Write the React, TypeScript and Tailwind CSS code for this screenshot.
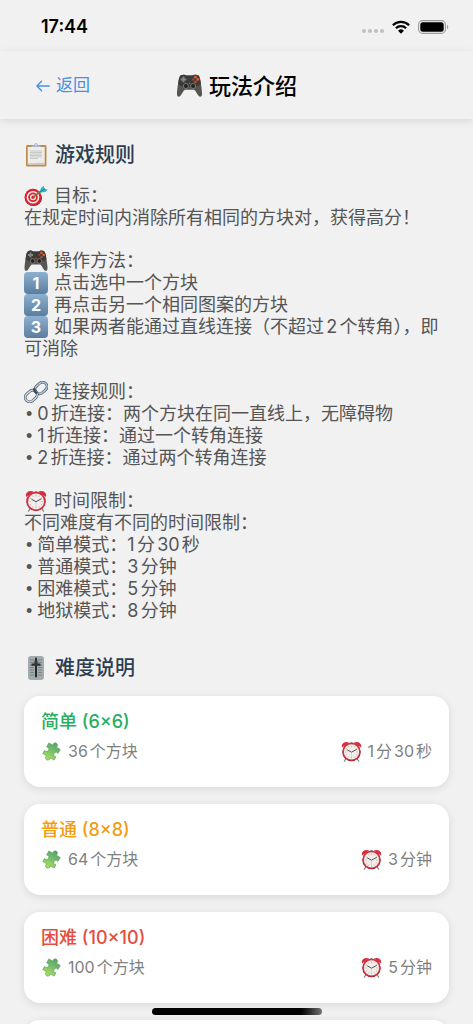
import React from "react";

type IconProps = { className?: string };

const GamepadIcon: React.FC<IconProps> = ({ className }) => (
  <svg viewBox="0 0 24 22" className={className} aria-hidden="true">
    <path
      d="M4 1.2C5.500.3 8 .4 9 1.400h6c1-1 3.500-1.100 5-.2 1 .6 1.500 2.400 2 5 .7 4 1.400 8.500 1.500 12 .1 2.500-1.600 3.300-3 2-1.600-1.500-2.500-4.700-4.200-5.800H7.700C6 15.500 5.100 18.700 3.500 20.200c-1.400 1.300-3.100.5-3-2 .1-3.500.8-8 1.500-12 .5-2.600 1-4.400 2-5z"
      fill="#555652"
    />
    <path
      d="M4 1.2C5.500.3 8 .4 9 1.400h6c1-1 3.500-1.100 5-.2 1 .6 1.500 2.400 2 5l.4 3c-3 3.500-17.800 3.500-20.800 0l.4-3c.5-2.600 1-4.400 2-5z"
      fill="#3b3c3a"
    />
    <path d="M6.500 2.500v5M4 5h5" stroke="#858783" strokeWidth="1.800" />
    <circle cx="17.500" cy="2.900" r="1.300" fill="#f2552c" />
    <circle cx="15.500" cy="5" r="1.100" fill="#96452e" />
    <circle cx="19.700" cy="5" r="1.300" fill="#f2552c" />
    <circle cx="17.500" cy="7.100" r="1.200" fill="#d9451f" />
    <circle cx="8.700" cy="11" r="2.300" fill="#222" stroke="#8d8e8a" strokeWidth=".7" />
    <circle cx="15.300" cy="11" r="2.300" fill="#222" stroke="#8d8e8a" strokeWidth=".7" />
    <circle cx="12" cy="8.500" r=".7" fill="#e5522b" />
  </svg>
);

const ClipboardIcon: React.FC<IconProps> = ({ className }) => (
  <svg viewBox="0 0 24 24" className={className} aria-hidden="true">
    <rect x="2" y="2" width="20.500" height="21.500" rx="1.500" fill="#bd8b4b" />
    <path d="M3.700 4h17v17.500h-17z" fill="#ededeb" />
    <path d="M3.700 20.500l17-1v2h-17z" fill="#c9c9c7" />
    <path
      d="M6 8h12M6 9.500h12M6 11h12M6 12.500h12M6 14h12M6 15.500h8"
      stroke="#bfc0c1"
      strokeWidth=".8"
    />
    <path d="M7 4c0-1.300 1-1.600 3-1.800C10.200.9 10.900.3 12 .3s1.800.6 2 1.900c2 .2 3 .5 3 1.800z" fill="#aeb8c7" />
    <circle cx="12" cy="1.700" r=".7" fill="#f0f0f0" />
  </svg>
);

const TargetIcon: React.FC<IconProps> = ({ className }) => (
  <svg viewBox="0 0 24 22" className={className} aria-hidden="true">
    <ellipse cx="9.500" cy="13.300" rx="8.500" ry="7.800" fill="#8e1b22" />
    <circle cx="9" cy="12.300" r="8.500" fill="#d9242f" />
    <circle cx="9" cy="12.300" r="6.300" fill="#f7eeee" />
    <circle cx="9" cy="12.300" r="4.800" fill="#d9242f" />
    <circle cx="9" cy="12.300" r="3" fill="#f7eeee" />
    <circle cx="9" cy="12.300" r="1.700" fill="#d9242f" />
    <path d="M9.500 12l7-5.500" stroke="#8a7340" strokeWidth="1.600" />
    <path d="M15 7.800l2.200-5L20 .8l.3 2.900 3.400.8-2.400 2.600z" fill="#35b3c4" />
    <path d="M15.300 7.500L21 3.500" stroke="#16798d" strokeWidth=".9" />
  </svg>
);

const LinkIcon: React.FC<IconProps> = ({ className }) => (
  <svg viewBox="0 0 24 22" className={className} aria-hidden="true">
    <g fill="none">
      <rect x="10.500" y="2.600" width="13" height="8.800" rx="4.400" transform="rotate(-42 17 7)" stroke="#4b5867" strokeWidth="2.800" />
      <rect x="10.500" y="2.600" width="13" height="8.800" rx="4.400" transform="rotate(-42 17 7)" stroke="#b4c6d8" strokeWidth="1.500" />
      <rect x=".7" y="10.600" width="13" height="8.800" rx="4.400" transform="rotate(-42 7.200 15)" stroke="#4b5867" strokeWidth="2.800" />
      <rect x=".7" y="10.600" width="13" height="8.800" rx="4.400" transform="rotate(-42 7.200 15)" stroke="#c7d6e4" strokeWidth="1.500" />
      <path d="M10.600 7.200c-.9 2.300.5 4.200 2.700 4.800" stroke="#3b4550" strokeWidth="2.300" />
    </g>
  </svg>
);

const ClockIcon: React.FC<IconProps> = ({ className }) => (
  <svg viewBox="0 0 24 24" className={className} aria-hidden="true">
    <path d="M5.500 20.500L3.500 23.500M18.500 20.500l2 3" stroke="#8b8b8b" strokeWidth="1.400" />
    <path d="M10.500 1h3v2h-3z" fill="#a6a6a6" />
    <path d="M1.200 7.500C-.3 3.200 4-.5 9.500 1.700z" fill="#d52f3f" />
    <path d="M22.800 7.500C24.300 3.200 20-.5 14.500 1.700z" fill="#d52f3f" />
    <circle cx="12" cy="12.500" r="10.600" fill="#a91f2d" />
    <circle cx="12" cy="12.200" r="10.300" fill="#cf3140" />
    <circle cx="12" cy="12.500" r="8.700" fill="#f1efec" />
    <path
      d="M12 5v2M12 18v2M4.500 12.500h2M17.500 12.500h2M8.200 6l.8 1.400M15.800 6L15 7.400M5.500 8.700l1.400.8M18.500 8.700l-1.400.8M5.500 16.300l1.400-.8M18.500 16.300l-1.400-.8M8.200 19l.8-1.400M15.800 19l-.8-1.400"
      stroke="#d99b97"
      strokeWidth=".8"
    />
    <path d="M7 10l5 2.800 6-3.300" stroke="#3d3d3d" strokeWidth="1" fill="none" />
    <path d="M12 12.800v5" stroke="#bbb" strokeWidth=".5" />
  </svg>
);

const SliderIcon: React.FC<IconProps> = ({ className }) => (
  <svg viewBox="0 0 24 24" className={className} aria-hidden="true">
    <rect x="4" y="0" width="16" height="24" rx="3" fill="#a3aaad" />
    <path
      d="M6 4h4M6 6.500h4M6 9h4M6 11.500h4M6 14h4M6 16.500h4M6 19h4M14 4h4M14 6.500h4M14 9h4M14 11.500h4M14 14h4M14 16.500h4M14 19h4"
      stroke="#737b7f"
      strokeWidth=".8"
    />
    <path d="M12 2.500v18" stroke="#24282a" strokeWidth="2" strokeLinecap="round" />
    <path d="M7.800 7.500h8.400l.5 2.300H7.300z" fill="#2c3032" />
    <path d="M10.500 4.500h3l.3 5.300h-3.600z" fill="#34393b" />
  </svg>
);

const PuzzleIcon: React.FC<IconProps> = ({ className }) => (
  <svg viewBox="0 0 24 24" className={className} aria-hidden="true">
    <defs>
      <linearGradient id="puzzle" x1="0" y1="0" x2="0" y2="1">
        <stop offset="0" stopColor="#4fa46d" />
        <stop offset=".5" stopColor="#7cc06a" />
        <stop offset="1" stopColor="#a8e65a" />
      </linearGradient>
    </defs>
    {/* knobs on top, right and bottom-left corner piece, bites on the other sides */}
    <path
      d="M4.500 5h5.300a2.600 2.600 0 1 1 4.400 0h5.300v5.300a2.600 2.600 0 1 0 0 4.400V19h-5.300a2.600 2.600 0 1 1-4.400 0H4.500v-4.300a2.600 2.600 0 1 0 0-4.400z"
      transform="rotate(30 12 12)"
      fill="url(#puzzle)"
      stroke="#4f9150"
      strokeWidth=".6"
      strokeLinejoin="round"
    />
  </svg>
);

const StatusBar: React.FC = () => (
  <div className="flex h-[51px] shrink-0 items-center justify-between pt-0.5 pl-[41px] pr-6 text-black">
    <span className="text-lg font-semibold">17:44</span>
    <div className="flex items-center gap-2">
      <svg viewBox="0 0 22 4" className="mt-2 h-1 w-[22px]" fill="#c0c0c0" aria-hidden="true">
        <circle cx="2" cy="2" r="2" />
        <circle cx="8" cy="2" r="2" />
        <circle cx="14" cy="2" r="2" />
        <circle cx="20" cy="2" r="2" />
      </svg>
      <svg viewBox="0 0 18 14" className="h-3.5 w-[18px]" aria-hidden="true">
        <g fill="none" stroke="#000" strokeWidth="2.300">
          <path d="M.9 5.200a11.600 11.600 0 0 1 16.200 0" />
          <path d="M3.900 8.300a7.300 7.300 0 0 1 10.200 0" />
        </g>
        <path d="M9 13.700l-2.900-3a4.200 4.200 0 0 1 5.800 0z" />
      </svg>
      <svg viewBox="0 0 31 14" className="h-3.5 w-[31px]" aria-hidden="true">
        <rect x=".6" y=".6" width="26.800" height="12.800" rx="4" fill="none" stroke="#9b9b9b" strokeWidth="1.100" />
        <rect x="2.300" y="2.300" width="23.400" height="9.400" rx="2.500" />
        <path d="M29 4.800c1.700.7 1.700 3.700 0 4.400z" fill="#9b9b9b" />
      </svg>
    </div>
  </div>
);

// Inline icon sitting at the start of a text line
const lineIcon = "inline-block h-[22px] w-6 align-top mr-1.5";

const KeyCap: React.FC<{ n: number }> = ({ n }) => (
  <span className="mr-1.5 inline-block h-[22px] w-6 rounded bg-linear-to-b from-[#8fb1d1] to-[#5b7e9f] text-center align-top text-base leading-[22px] font-bold text-white">
    {n}
  </span>
);

const RuleItem: React.FC<{ children: React.ReactNode }> = ({ children }) => (
  <p className="pl-0.5">
    <span className="font-['Liberation_Sans',sans-serif]">• </span>
    {children}
  </p>
);

const levels = [
  { name: "简单 (6×6)", color: "text-[#27ae60]", blocks: "36个方块", time: "1分30秒" },
  { name: "普通 (8×8)", color: "text-[#f39c12]", blocks: "64个方块", time: "3分钟" },
  { name: "困难 (10×10)", color: "text-[#e74c3c]", blocks: "100个方块", time: "5分钟" },
  { name: "地狱 (12×12)", color: "text-[#8e44ad]", blocks: "144个方块", time: "8分钟" },
];

const HelpPage: React.FC = () => {
  return (
    <div className="relative flex h-screen flex-col overflow-hidden bg-[#f1f1f1] font-['Inter','Noto_Sans_CJK_SC',sans-serif] [text-autospace:normal]">
      <StatusBar />

      {/* Header */}
      <header className="relative z-10 grid h-[68px] shrink-0 grid-cols-[1fr_auto_1fr] items-center bg-[#f1f1f1] px-9 pt-0.5 shadow-[0_2px_8px_rgba(0,0,0,0.1)]">
        <button
          type="button"
          className="flex items-center gap-1.5 justify-self-start text-[17px] text-[#4a90e2]"
          onClick={() => window.history.back()}
        >
          <svg viewBox="0 0 14 12" className="h-3 w-3.5" fill="none" stroke="currentColor" strokeWidth="1.400" strokeLinecap="round" strokeLinejoin="round" aria-hidden="true">
            <path d="M13.200 6H1M5.500 1.300L.9 6l4.600 4.700" />
          </svg>
          返回
        </button>
        <h1 className="flex items-center gap-1.5 text-[22px] leading-8 font-medium text-black">
          <GamepadIcon className="h-6 w-[27px]" />
          玩法介绍
        </h1>
      </header>

      <main className="min-h-0 flex-1 overflow-y-auto px-6 pt-[22px] pb-10 [scrollbar-width:none]">
        {/* Rules */}
        <section>
          <h2 className="mb-4 flex items-center gap-[7px] text-xl leading-7 font-medium text-[#2c3e50]">
            <ClipboardIcon className="size-6" />
            游戏规则
          </h2>
          <div className="flex flex-col gap-[21px] text-lg leading-[22px] text-[#555]">
            <div>
              <p>
                <TargetIcon className={lineIcon} />
                目标：
              </p>
              <p>在规定时间内消除所有相同的方块对，获得高分！</p>
            </div>
            <div>
              <p>
                <GamepadIcon className={lineIcon} />
                操作方法：
              </p>
              <p>
                <KeyCap n={1} />
                点击选中一个方块
              </p>
              <p>
                <KeyCap n={2} />
                再点击另一个相同图案的方块
              </p>
              <p>
                <KeyCap n={3} />
                如果两者能通过直线连接（不超过2个转角），即可消除
              </p>
            </div>
            <div>
              <p>
                <LinkIcon className={lineIcon} />
                连接规则：
              </p>
              <RuleItem>0折连接：两个方块在同一直线上，无障碍物</RuleItem>
              <RuleItem>1折连接：通过一个转角连接</RuleItem>
              <RuleItem>2折连接：通过两个转角连接</RuleItem>
            </div>
            <div>
              <p>
                <ClockIcon className={lineIcon} />
                时间限制：
              </p>
              <p>不同难度有不同的时间限制：</p>
              <RuleItem>简单模式：1分30秒</RuleItem>
              <RuleItem>普通模式：3分钟</RuleItem>
              <RuleItem>困难模式：5分钟</RuleItem>
              <RuleItem>地狱模式：8分钟</RuleItem>
            </div>
          </div>
        </section>

        {/* Difficulty levels */}
        <section className="mt-8">
          <h2 className="mb-3.5 flex items-center gap-[7px] text-xl leading-7 font-medium text-[#2c3e50]">
            <SliderIcon className="size-6" />
            难度说明
          </h2>
          <div className="flex flex-col gap-[17px]">
            {levels.map((level) => (
              <div
                key={level.name}
                className="rounded-2xl bg-white px-[17px] pt-3.5 pb-6 shadow-[0_2px_8px_rgba(0,0,0,0.1)]"
              >
                <h3 className={`mb-[5px] text-lg leading-6 font-medium ${level.color}`}>
                  {level.name}
                </h3>
                <div className="flex items-center justify-between text-base leading-6 text-[#7f7f7f]">
                  <span className="flex items-center gap-1.5">
                    <PuzzleIcon className="size-[21px] overflow-visible" />
                    {level.blocks}
                  </span>
                  <span className="flex items-center gap-1.5">
                    <ClockIcon className="size-[21px]" />
                    {level.time}
                  </span>
                </div>
              </div>
            ))}
          </div>
        </section>
      </main>

      {/* Home indicator */}
      <div className="absolute bottom-[9px] left-1/2 z-20 h-[7px] w-[170px] -translate-x-1/2 rounded-full bg-linear-to-r from-black from-85% to-[#777]" />
    </div>
  );
};

export default HelpPage;
